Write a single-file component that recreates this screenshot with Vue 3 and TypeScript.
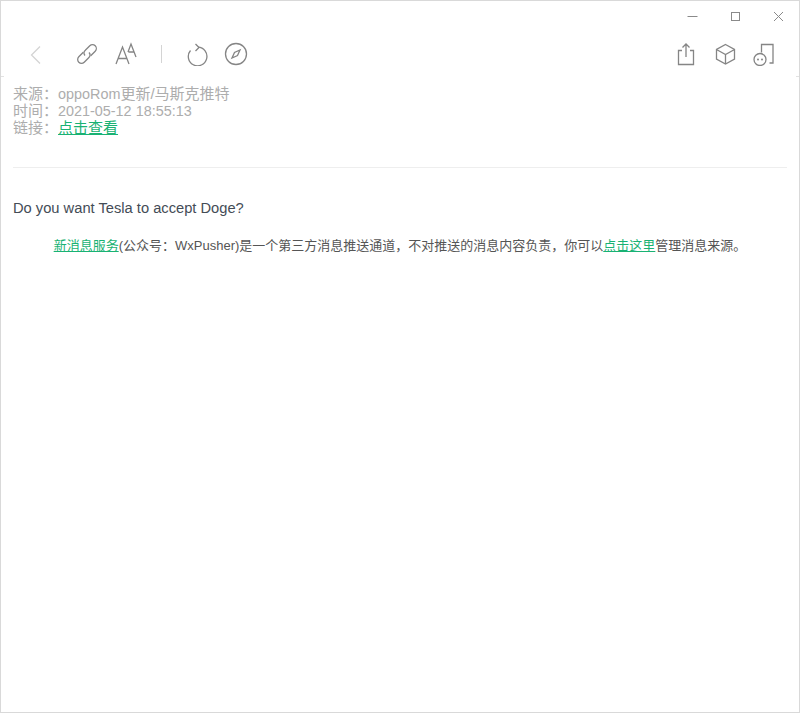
<template>
  <div class="window">
    <div class="titlebar">
      <button class="win-btn" aria-label="minimize">
        <svg width="11" height="11" viewBox="0 0 11 11"><path d="M0.500 5.500h10" /></svg>
      </button>
      <button class="win-btn" aria-label="maximize">
        <svg width="11" height="11" viewBox="0 0 11 11"><rect x="1.500" y="1.500" width="8" height="8" /></svg>
      </button>
      <button class="win-btn" aria-label="close">
        <svg width="11" height="11" viewBox="0 0 11 11"><path d="M1 1l9 9M10 1l-9 9" /></svg>
      </button>
    </div>

    <div class="toolbar">
      <div class="tool-group">
        <svg class="icon icon--back" viewBox="0 0 24 24"><path d="M16 4.500 7.500 13 16 21.500" /></svg>
        <svg class="icon icon--link" viewBox="0 0 24 24">
          <path d="M15.700 13.700 20.200 9.200A3.800 3.800 0 0 0 14.800 3.800L10.300 8.300A3.800 3.800 0 0 0 10 13.500" />
          <path d="M8.300 10.300 3.800 14.800A3.800 3.800 0 0 0 9.200 20.200L13.700 15.700A3.800 3.800 0 0 0 14 10.500" />
        </svg>
        <svg class="icon icon--font" viewBox="0 0 24 24">
          <path d="M3 22 9.500 5 16 22M5.200 16.500h8.600" />
          <path d="M15 10 18 2 23 15M15.500 10h6" />
        </svg>
        <span class="divider"></span>
        <svg class="icon icon--refresh" viewBox="0 0 24 24">
          <path d="M13 5.200A9.300 9.300 0 1 1 5.500 8.500" />
          <path d="M10.500 2 14 5.500 10.500 9" />
        </svg>
        <svg class="icon" viewBox="0 0 24 24">
          <circle cx="12" cy="12" r="10.500" />
          <path d="M16 8 13.500 13.500 8 16 10.500 10.500Z" />
        </svg>
      </div>
      <div class="tool-group">
        <svg class="icon" viewBox="0 0 24 24">
          <path d="M8 8.500H4.500V22.500H19.500V8.500H16" />
          <path d="M12 15V2M8.500 5.500 12 2 15.500 5.500" />
        </svg>
        <svg class="icon" viewBox="0 0 24 24">
          <path d="M12.500 2.500 21.500 7.500V17L12.500 22 3.500 17V7.500ZM3.500 7.500 12.500 12.500 21.500 7.500M12.500 12.500V22" />
        </svg>
        <svg class="icon" viewBox="0 0 24 24">
          <path d="M9.500 10.500V2.500H21V21H17.500" />
          <circle cx="8" cy="17.500" r="6" />
          <circle class="dot" cx="6" cy="17.500" r="1" />
          <circle class="dot" cx="10" cy="17.500" r="1" />
        </svg>
      </div>
    </div>

    <main class="content">
      <div class="meta">
        <div class="meta-row">来源：<span class="latin">oppoRom</span>更新/马斯克推特</div>
        <div class="meta-row">时间：<span class="latin">{{ sentAt }}</span></div>
        <div class="meta-row">链接：<a class="link" href="#">点击查看</a></div>
      </div>
      <hr class="rule" />
      <p class="message">Do you want Tesla to accept Doge?</p>
      <p class="notice">
        <a class="link" href="#">新消息服务</a>(公众号：WxPusher)是一个第三方消息推送通道，不对推送的消息内容负责，你可以<a class="link" href="#">点击这里</a>管理消息来源。
      </p>
    </main>
  </div>
</template>

<script setup lang="ts">
const sentAt: string = '2021-05-12 18:55:13'
</script>

<style>
html,
body {
  margin: 0;
  background: #fff;
}
</style>

<style scoped>
.window {
  box-sizing: border-box;
  height: 713px;
  border: 1px solid #d9d9d9;
  background: #fff;
  font-family: "Liberation Sans", "Noto Sans CJK SC", sans-serif;
  overflow: hidden;
}

.titlebar {
  display: flex;
  justify-content: flex-end;
  height: 30px;
  margin-right: -1px;
}

.win-btn {
  display: flex;
  align-items: center;
  justify-content: center;
  width: 43px;
  height: 30px;
  padding: 0;
  border: none;
  background: none;
}

.win-btn svg {
  fill: none;
  stroke: #8a8a8a;
  stroke-width: 1;
}

.toolbar {
  position: relative;
  display: flex;
  align-items: center;
  justify-content: space-between;
  height: 46px;
  padding: 0 23px;
}

.toolbar::before,
.toolbar::after {
  content: "";
  position: absolute;
  bottom: 0;
  width: 3px;
  height: 1px;
  background: #e2e2e2;
}

.toolbar::before {
  left: 0;
}

.toolbar::after {
  right: 0;
}

.tool-group {
  display: flex;
  align-items: center;
  gap: 15px;
}

.icon {
  width: 24px;
  height: 24px;
  fill: none;
  stroke: #858585;
  stroke-width: 1.3;
}

.icon--back {
  margin-right: 12px;
  stroke: #d4d4d4;
}

.icon--font {
  margin-left: -1px;
  margin-right: 9px;
}

.icon .dot {
  fill: #858585;
  stroke: none;
}

.divider {
  width: 1px;
  height: 18px;
  margin-right: 8px;
  background: #d4d4d4;
}

.content {
  padding: 8px 12px 0;
}

.meta {
  font-size: 15px;
  color: #adadad;
}

.meta-row {
  height: 17px;
  line-height: 17px;
}

.latin {
  font-size: 14.4px;
  line-height: 1;
}

.link {
  color: #19b273;
  text-decoration: underline;
}

.rule {
  height: 1px;
  margin: 31px 0 0;
  border: none;
  background: #eeeeee;
}

.message {
  margin: 32px 0 0;
  font-size: 14.7px;
  line-height: 17px;
  color: #444c56;
}

.notice {
  margin: 20px 0 0;
  font-size: 13px;
  line-height: 17px;
  color: #555;
  text-align: center;
}
</style>
